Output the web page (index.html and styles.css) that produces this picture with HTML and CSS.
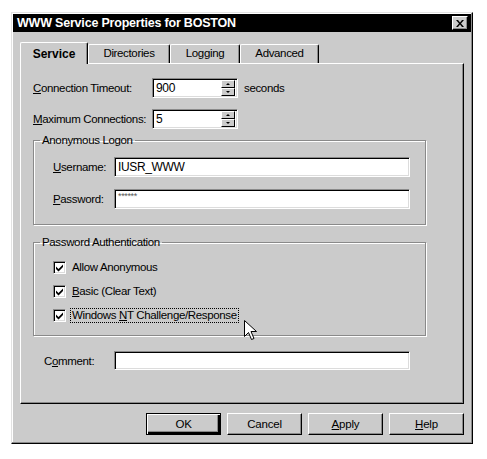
FILE: index.html
```html
<!DOCTYPE html>
<html lang="en">
<head>
    <meta charset="UTF-8">
    <title>WWW Service Properties for BOSTON</title>
    <link rel="stylesheet" href="styles.css">
</head>
<body>

<div class="window">
    <div class="titlebar">
        <span class="title">WWW Service Properties for BOSTON</span>
        <span class="close">
            <svg width="8" height="7" viewBox="0 0 8 7"><path d="M0 0h2l2 2.5L6 0h2L5 3.5 8 7H6L4 4.5 2 7H0l3-3.5z" fill="#000"/></svg>
        </span>
    </div>

    <div class="tabs">
        <div class="tab active tab-service">Service</div>
        <div class="tab tab-dirs">Directories</div>
        <div class="tab tab-log">Logging</div>
        <div class="tab tab-adv">Advanced</div>
    </div>

    <div class="panel">
        <div class="row row-first">
            <label class="label-wide"><u>C</u>onnection Timeout:</label>
            <div class="field spin-field">
                <span class="value">900</span>
                <span class="spinner">
                    <span class="spin-btn"><i class="arrow-up"></i></span>
                    <span class="spin-btn"><i class="arrow-down"></i></span>
                </span>
            </div>
            <span class="unit">seconds</span>
        </div>
        <div class="row row-second">
            <label class="label-wide"><u>M</u>aximum Connections:</label>
            <div class="field spin-field">
                <span class="value">5</span>
                <span class="spinner">
                    <span class="spin-btn"><i class="arrow-up"></i></span>
                    <span class="spin-btn"><i class="arrow-down"></i></span>
                </span>
            </div>
        </div>

        <fieldset class="group group-logon">
            <legend>Anonymous Logon</legend>
            <div class="row row-user">
                <label class="label-short"><u>U</u>sername:</label>
                <div class="field text-field"><span class="value">IUSR_WWW</span></div>
            </div>
            <div class="row row-pass">
                <label class="label-short"><u>P</u>assword:</label>
                <div class="field text-field"><span class="value stars">******</span></div>
            </div>
        </fieldset>

        <fieldset class="group group-auth">
            <legend>Password Authentication</legend>
            <div class="check-row check-first">
                <span class="checkbox"><svg width="9" height="9" viewBox="0 0 9 9"><path d="M1 3.5l2.5 2.5L8 1.5V4L3.5 8.5 1 6z" fill="#000"/></svg></span>
                <span class="check-label">Allow Anonymous</span>
            </div>
            <div class="check-row">
                <span class="checkbox"><svg width="9" height="9" viewBox="0 0 9 9"><path d="M1 3.5l2.5 2.5L8 1.5V4L3.5 8.5 1 6z" fill="#000"/></svg></span>
                <span class="check-label"><u>B</u>asic (Clear Text)</span>
            </div>
            <div class="check-row">
                <span class="checkbox"><svg width="9" height="9" viewBox="0 0 9 9"><path d="M1 3.5l2.5 2.5L8 1.5V4L3.5 8.5 1 6z" fill="#000"/></svg></span>
                <span class="check-label focused">Windows <u>N</u>T Challenge/Response</span>
                <svg class="cursor" width="13" height="21" viewBox="0 0 13 21"><path d="M0.5 0.5v16l4-4 3 7 2.5-1-3-7h5.5z" fill="#fff" stroke="#000" stroke-width="1"/></svg>
            </div>
        </fieldset>

        <div class="row row-comment">
            <label class="label-comment">C<u>o</u>mment:</label>
            <div class="field text-field"></div>
        </div>
    </div>

    <div class="buttons">
        <button class="btn default">OK</button>
        <button class="btn">Cancel</button>
        <button class="btn"><u>A</u>pply</button>
        <button class="btn"><u>H</u>elp</button>
    </div>
</div>

</body>
</html>
```

FILE: styles.css
```css
body {
    margin: 0;
    background-color: #fff;
    font-family: "Liberation Sans", Arial, sans-serif;
    font-size: 11.5px;
    letter-spacing: -0.35px;
    color: #000;
}
u {
    text-decoration: underline;
    text-underline-offset: 1px;
}
label,
.check-label,
.unit,
legend {
    white-space: nowrap;
}
.window {
    box-sizing: border-box;
    width: 462px;
    height: 432px;
    margin: 12px 0 0 11px;
    padding: 1px;
    background-color: #cbcbcb;
    border: 1px solid;
    border-color: #e2e2e2 #000 #000 #e2e2e2;
    box-shadow: inset -1px -1px 0 #8a8a8a, inset 1px 1px 0 #fff;
}
/* Title bar */
.titlebar {
    height: 18px;
    background-color: #000;
    color: #fff;
    display: flex;
    align-items: center;
    justify-content: space-between;
    padding: 0 3px 0 4px;
}
.title {
    font-weight: bold;
    font-size: 12.5px;
    letter-spacing: -0.2px;
}
.close {
    box-sizing: border-box;
    width: 16px;
    height: 14px;
    background-color: #cbcbcb;
    border: 1px solid;
    border-color: #fff #000 #000 #fff;
    box-shadow: inset -1px -1px 0 #8a8a8a;
    display: flex;
    align-items: center;
    justify-content: center;
}
/* Tabs */
.tabs {
    display: flex;
    align-items: flex-end;
    height: 21px;
    margin: 10px 0 0 7px;
    position: relative;
    z-index: 1;
}
.tab {
    box-sizing: border-box;
    height: 19px;
    padding-top: 2px;
    text-align: center;
    border-top: 1px solid #fff;
    border-left: 1px solid #fff;
    border-right: 1px solid #000;
    border-radius: 2px 2px 0 0;
    box-shadow: inset -1px 0 0 #8a8a8a;
}
.tab.active {
    height: 22px;
    margin-bottom: -1px;
    padding-top: 4px;
    font-weight: bold;
    font-size: 12px;
    letter-spacing: 0;
    background-color: #cbcbcb;
}
.tab-service { width: 68px; }
.tab-dirs { width: 82px; }
.tab-log { width: 70px; }
.tab-adv { width: 79px; }
/* Panel */
.panel {
    box-sizing: border-box;
    height: 341px;
    margin: 0 7px;
    padding: 14px 0 0 12px;
    border: 1px solid;
    border-color: #fff #000 #000 #fff;
    box-shadow: inset -1px -1px 0 #8a8a8a;
}
.row {
    display: flex;
    align-items: center;
    height: 20px;
}
.row-second { margin-top: 11px; }
.label-wide { width: 119px; }
.label-short { width: 61px; }
.label-comment { width: 70px; padding-left: 11px; }
.unit { margin-left: 6px; }
.field {
    box-sizing: border-box;
    height: 20px;
    background-color: #fff;
    border: 1px solid;
    border-color: #8a8a8a #fff #fff #8a8a8a;
    box-shadow: inset 1px 1px 0 #000, inset -1px -1px 0 #dcdcdc;
    display: flex;
    align-items: center;
    padding-left: 3px;
    font-size: 12px;
}
.spin-field {
    width: 86px;
    justify-content: space-between;
    padding-right: 2px;
}
.text-field { width: 296px; }
.value { line-height: 16px; }
.stars {
    font-size: 9px;
    color: #555;
    align-self: flex-start;
    line-height: 12px;
}
.spinner {
    display: flex;
    flex-direction: column;
    width: 14px;
    height: 16px;
}
.spin-btn {
    box-sizing: border-box;
    flex: 1;
    background-color: #cbcbcb;
    border: 1px solid;
    border-color: #fff #000 #000 #fff;
    display: flex;
    align-items: center;
    justify-content: center;
}
.arrow-up,
.arrow-down {
    width: 0;
    height: 0;
    border-left: 2px solid transparent;
    border-right: 2px solid transparent;
}
.arrow-up { border-bottom: 2px solid #000; }
.arrow-down { border-top: 2px solid #000; }
/* Group boxes */
.group {
    box-sizing: border-box;
    width: 393px;
    margin: 4px 0 0 0;
    padding: 0 0 0 19px;
    border: 1px solid #8a8a8a;
    box-shadow: inset 1px 1px 0 #fff, 1px 1px 0 #fff;
}
.group legend {
    margin-left: -13px;
    padding: 0 2px;
    line-height: 14px;
}
.group-logon { height: 92px; }
.row-user { margin-top: 10px; }
.row-pass { margin-top: 12px; }
.group-auth {
    height: 101px;
    margin-top: 10px;
}
.check-row {
    position: relative;
    display: flex;
    align-items: center;
    height: 16px;
    margin-top: 8px;
}
.check-first { margin-top: 10px; }
.checkbox {
    box-sizing: border-box;
    width: 13px;
    height: 13px;
    background-color: #fff;
    border: 1px solid;
    border-color: #8a8a8a #fff #fff #8a8a8a;
    box-shadow: inset 1px 1px 0 #000, inset -1px -1px 0 #dcdcdc;
    display: flex;
    align-items: center;
    justify-content: center;
    margin-right: 4px;
}
.check-label {
    padding: 0 1px;
    border: 1px solid transparent;
    line-height: 13px;
}
.check-label.focused { border: 1px dotted #000; }
.cursor {
    position: absolute;
    left: 191px;
    top: 13px;
}
.row-comment { margin-top: 15px; height: 19px; }
.row-comment .field { height: 19px; }
/* Buttons */
.buttons {
    display: flex;
    justify-content: flex-end;
    gap: 6px;
    margin: 9px 7px 0 0;
}
.btn {
    box-sizing: border-box;
    width: 75px;
    height: 22px;
    font-family: "Liberation Sans", Arial, sans-serif;
    font-size: 11.5px;
    letter-spacing: -0.2px;
    color: #000;
    background-color: #cbcbcb;
    border: 1px solid;
    border-color: #fff #000 #000 #fff;
    box-shadow: inset -1px -1px 0 #8a8a8a;
    padding: 0;
}
.btn.default {
    border: 1px solid #000;
    box-shadow: inset 1px 1px 0 #fff, inset -2px -2px 0 #000, inset -3px -3px 0 #8a8a8a;
}
```
